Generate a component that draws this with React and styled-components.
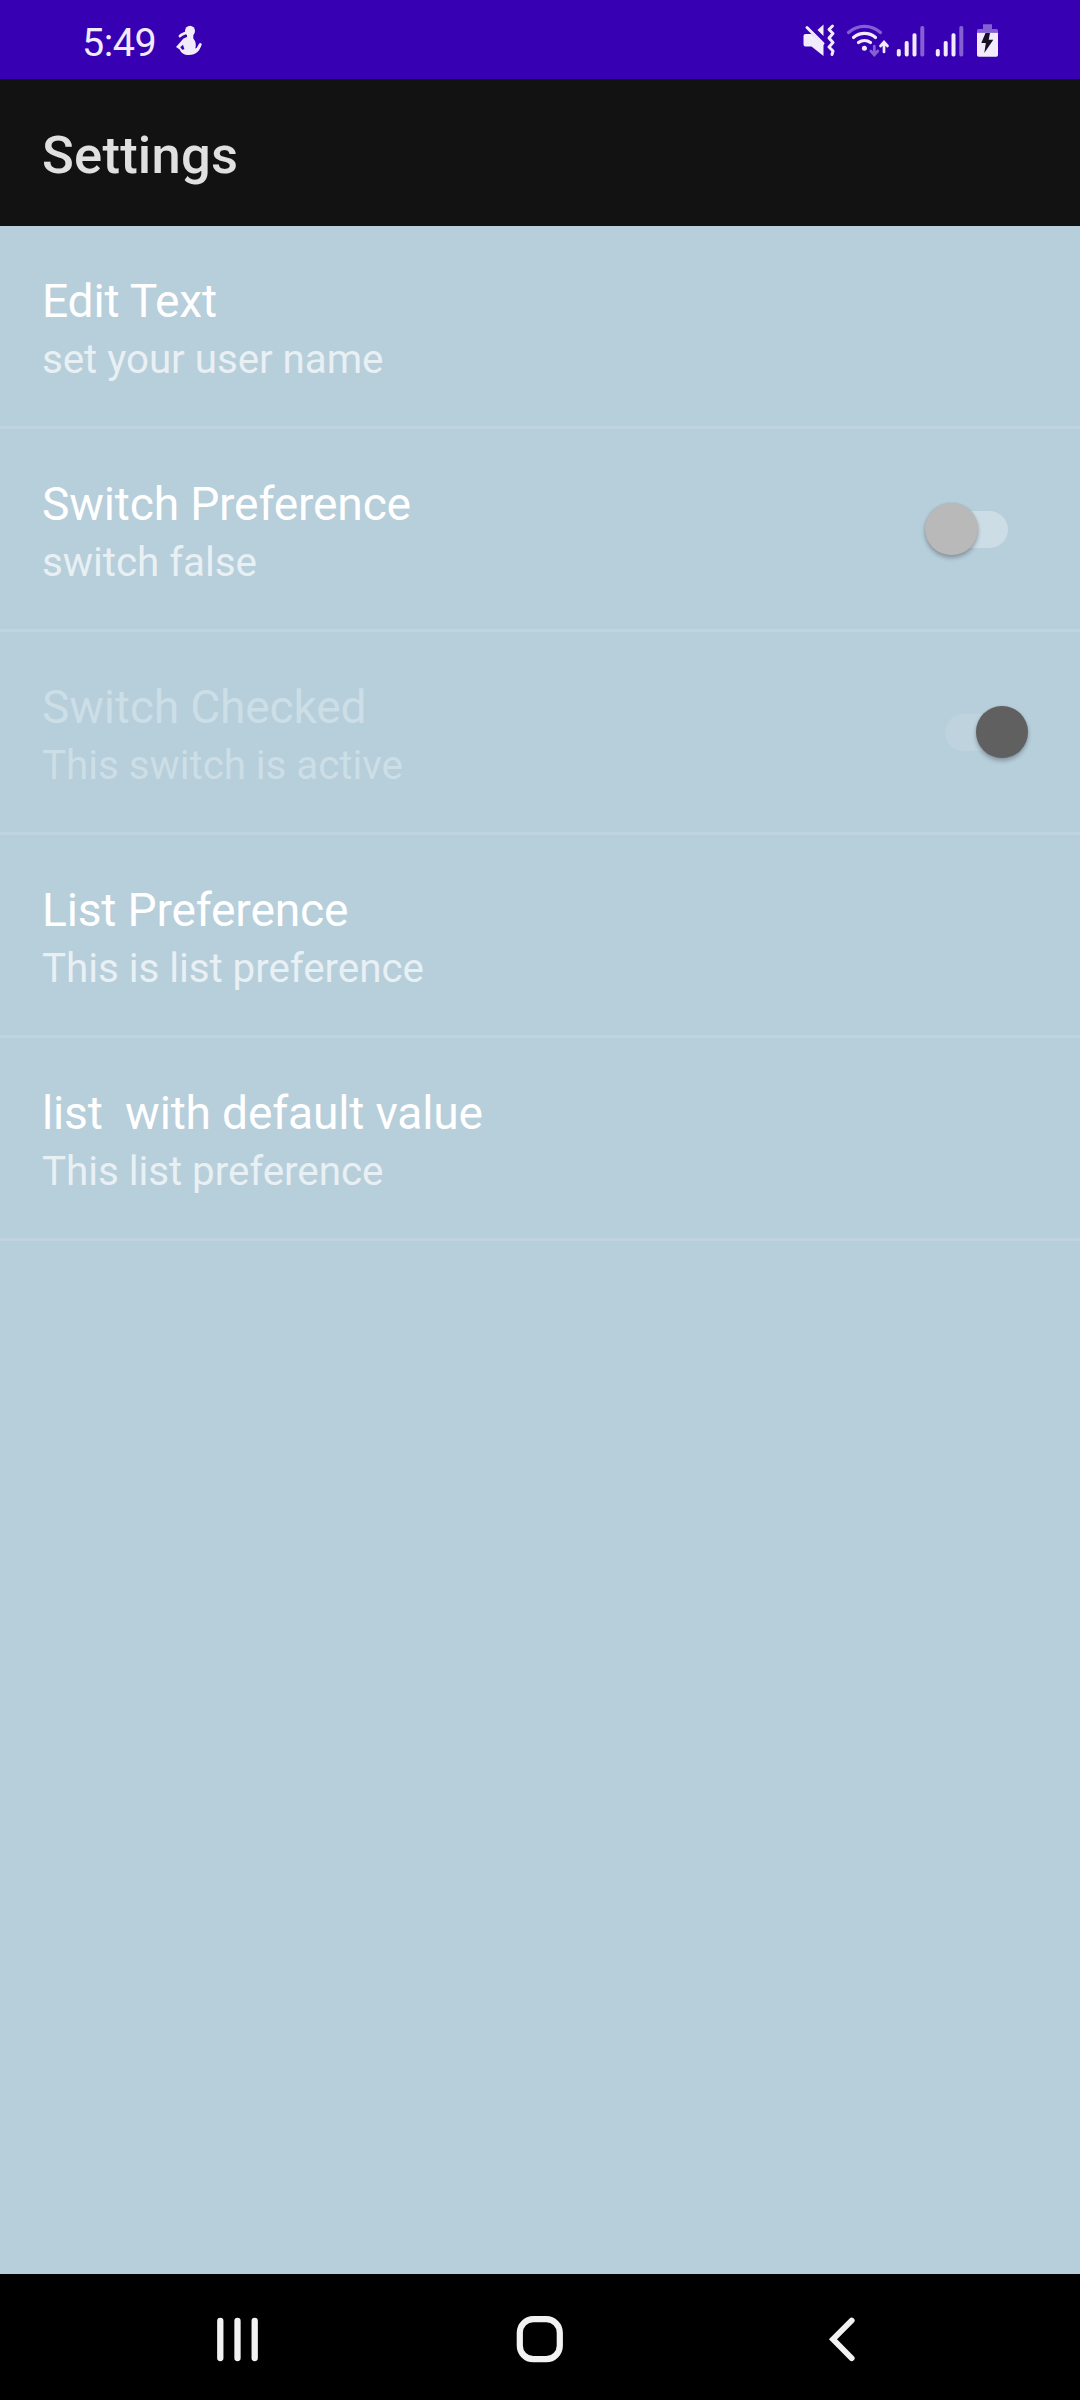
import React from "react";
import styled, { createGlobalStyle } from "styled-components";

const Global = createGlobalStyle`
  *{box-sizing:border-box;}
  body{margin:0;background:#b7cedb;font-family:Roboto,"Liberation Sans",sans-serif;}
`;
const Screen = styled.div`width:1080px;height:2400px;display:flex;flex-direction:column;background:#b7cedb;overflow:hidden;`;
const StatusBar = styled.header`height:79px;flex:none;background:#3700b3;display:flex;align-items:flex-start;padding:20px 80px 0 82px;`;
const Clock = styled.span`font-size:39.5px;line-height:44px;letter-spacing:-.5px;color:#f1ebfb;width:85px;padding-top:1px;white-space:nowrap;`;
const Icons = styled.div`display:flex;margin-left:auto;`;
const Glyph = styled.svg`display:block;flex:none;width:${(p) => p.$w}px;height:${(p) => p.$h || 40}px;`;
const AppBar = styled.div`height:147px;flex:none;background:#121212;display:flex;align-items:center;padding:0 42px;`;
const Title = styled.h1`margin:0;font-size:52.5px;line-height:62px;letter-spacing:.25px;font-weight:500;color:#e0e0e0;padding-top:5px;`;
const List = styled.main`flex:1;`;
const Row = styled.section`height:203px;display:flex;justify-content:space-between;padding:0 42px;border-bottom:3px solid rgba(255,255,255,.13);`;
const Copy = styled.div`display:flex;flex-direction:column;padding-top:48px;`;
const Name = styled.div`font-size:46.2px;line-height:54px;letter-spacing:-.2px;white-space:pre;color:${(p) => (p.$off ? "#ccdee6" : "#fff")};`;
const Summary = styled.div`font-size:40.4px;line-height:48px;letter-spacing:-.07px;margin-top:8px;white-space:pre;color:${(p) => (p.$off ? "#ccdee6" : "#e8f0f4")};`;
const Track = styled.div`
  width:63px;height:37px;border-radius:19px;margin:81.5px 30px 0 0;flex:none;display:flex;align-items:center;
  background:rgba(255,255,255,${(p) => (p.$off ? 0.1 : 0.3)});
`;
const Thumb = styled.div`
  width:52.5px;height:52.5px;border-radius:50%;flex:none;
  margin-left:${(p) => (p.$on ? 30.5 : -20)}px;
  background:${(p) => (p.$on ? "#606060" : "#b9b9b9")};
  box-shadow:0 3px 4px rgba(0,0,0,.26),0 0 2px rgba(0,0,0,.12);
`;
const NavBar = styled.nav`height:126px;flex:none;background:#000;display:flex;justify-content:space-between;align-items:center;padding:4px 211px 0 210px;`;

const items = [
  { name: "Edit Text", summary: "set your user name" },
  { name: "Switch Preference", summary: "switch false", toggle: "off" },
  { name: "Switch Checked", summary: "This switch is active", toggle: "on", disabled: true },
  { name: "List Preference", summary: "This is list preference" },
  { name: "list  with default value", summary: "This list preference" },
];

const W = "#f1ebfb";
const D = "#8560d2";

const Person = () => (
  <Glyph $w={40} viewBox="167 20 40 40" fill={W}>
    <ellipse cx="190" cy="31" rx="5" ry="5.300" />
    <path d="M187 34h6.300v4.500c2.700 3 3 6.500 2 10 1.800-.3 3.200-1.700 4-4.500h2c-.8 6.500-5.300 11-12.300 11-5 0-8-2-9.300-5.500L176 47l7.500-8.500 3.500-1.500z" />
    <path d="M180 36c2-1.800 4-2.200 6.500-3.500M200.300 44.500l-2.800 5" stroke={W} strokeWidth="2.800" strokeLinecap="round" fill="none" />
    <path d="M180.300 47.300l2.700-2.600 1.400 4.600-2.200.4z" fill="#3700b3" />
  </Glyph>
);
const Mute = () => (
  <Glyph $w={40} viewBox="799.500 20 40 40">
    <path d="M805 34h6l12 11v11L811 46.500h-6a2 2 0 0 1-2-2V36a2 2 0 0 1 2-2zM823 24.500V36l-6-6z" fill={W} />
    <path d="M806.500 27.500l16 16" stroke={W} strokeWidth="3" strokeLinecap="round" />
    <path d="M832 26l-3.500 3.500 4 4-4 4.500 4 4.500-4 4.500 4 4-1 3.500" fill="none" stroke={W} strokeWidth="3" strokeLinecap="round" strokeLinejoin="round" />
  </Glyph>
);
const Wifi = () => (
  <Glyph $w={52} viewBox="840 20 52 40" fill="none" strokeLinecap="round">
    <path d="M848.500 32.500a24 24 0 0 1 32 0" stroke={D} strokeWidth="3.200" />
    <path d="M853.500 37.500a17 17 0 0 1 22 0M858.500 42.500a10 10 0 0 1 12 0" stroke={W} strokeWidth="3.200" />
    <circle cx="864.400" cy="48.300" r="2.500" fill={W} />
    <path d="M874.300 46v8M870.800 51l3.500 4 3.500-4" stroke={D} strokeWidth="2.700" />
    <path d="M884 52v-8M880.500 46l3.500-4 3.500 4" stroke={W} strokeWidth="2.700" />
  </Glyph>
);
const Signal = () => (
  <Glyph $w={39} viewBox="892 20 39 40">
    <rect x="896.800" y="49" width="4" height="7.500" rx="1.700" fill={W} />
    <rect x="904.700" y="41" width="4" height="15.500" rx="1.700" fill={W} />
    <rect x="912.500" y="33.300" width="4" height="23.200" rx="1.700" fill={W} />
    <rect x="920.300" y="26" width="4" height="30.500" rx="1.700" fill={D} />
  </Glyph>
);
const Battery = () => (
  <Glyph $w={30} viewBox="970 20 30 40">
    <path d="M977 30.500a1.500 1.500 0 0 1 1.500-1.500H983v-4.700h9V29h4.500a1.500 1.500 0 0 1 1.500 1.500v2.200h-21z" fill={D} />
    <path d="M977 32.700h21V55a1.700 1.700 0 0 1-1.700 1.700h-17.600A1.700 1.700 0 0 1 977 55z" fill={W} />
    <path d="M985.500 33h4.500l-1.300 6.800h4.600l-9 13.200 1.500-10h-4.500z" fill="#171124" />
  </Glyph>
);

export default function App() {
  return (
    <Screen>
      <Global />
      <StatusBar>
        <Clock>5:49</Clock>
        <Person />
        <Icons>
          <Mute />
          <Wifi />
          <Signal />
          <Signal />
          <Battery />
        </Icons>
      </StatusBar>
      <AppBar>
        <Title>Settings</Title>
      </AppBar>
      <List>
        {items.map((it) => (
          <Row key={it.name}>
            <Copy>
              <Name $off={it.disabled}>{it.name}</Name>
              <Summary $off={it.disabled}>{it.summary}</Summary>
            </Copy>
            {it.toggle && (
              <Track $off={it.disabled}>
                <Thumb $on={it.toggle === "on"} />
              </Track>
            )}
          </Row>
        ))}
      </List>
      <NavBar>
        <Glyph $w={54} $h={54} viewBox="210 2312 54 54" stroke="#f2f2f2" strokeWidth="6.300" strokeLinecap="round">
          <path d="M220.300 2321v37M237.500 2321v37M254.700 2321v37" />
        </Glyph>
        <Glyph $w={54} $h={54} viewBox="512.500 2312 54 54">
          <rect x="519.300" y="2319.200" width="40" height="40" rx="13.500" fill="none" stroke="#f2f2f2" strokeWidth="6.200" />
        </Glyph>
        <Glyph $w={54} $h={54} viewBox="815 2312 54 54">
          <path d="M851.700 2320.500l-18.700 18.800 18.700 18.900" fill="none" stroke="#f2f2f2" strokeWidth="5.800" strokeLinecap="round" />
        </Glyph>
      </NavBar>
    </Screen>
  );
}
